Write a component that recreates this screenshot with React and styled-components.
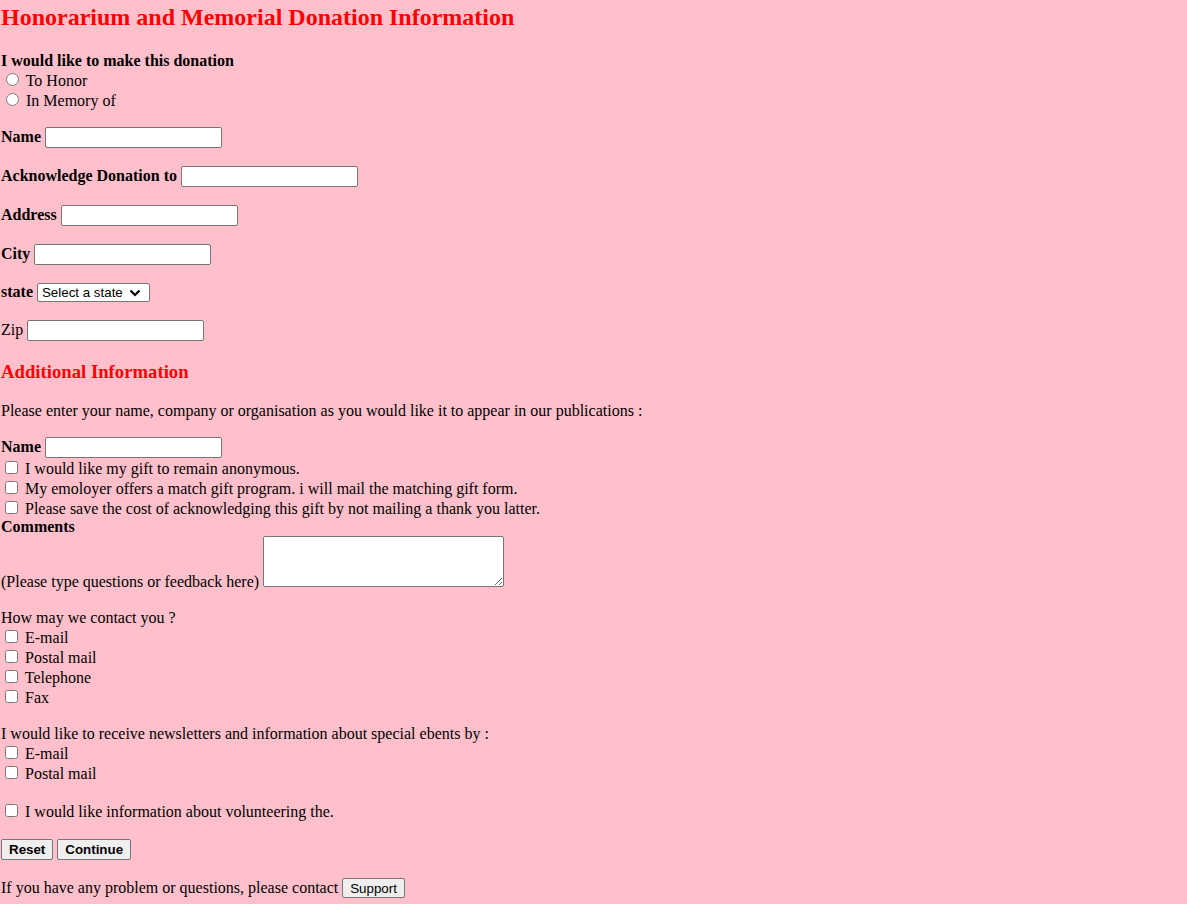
import React from "react";
import styled, { createGlobalStyle } from "styled-components";

const GlobalStyle = createGlobalStyle`
  html, body {
    margin: 0;
    padding: 0;
    background: pink;
  }
  body {
    font-family: "Liberation Serif", "Times New Roman", serif;
    font-size: 16px;
    color: #000;
  }
`;

const chevron =
  "url(\"data:image/svg+xml;utf8,<svg xmlns='http://www.w3.org/2000/svg' width='12' height='8' viewBox='0 0 12 8'><path d='M1.5 1.5 L6 6 L10.5 1.5' fill='none' stroke='black' stroke-width='2.2'/></svg>\")";

const Page = styled.form`
  padding: 4px 1px 8px 1px;
`;

const Title = styled.h2`
  color: red;
  font-size: 24px;
  font-weight: bold;
  margin: 0 0 21px 0;
`;

const SectionTitle = styled.h3`
  color: red;
  font-size: 18.72px;
  font-weight: bold;
  margin: 18.72px 0 19.5px 0;
`;

const Para = styled.p`
  margin: 16px 0;
  padding-bottom: ${(p) => p.$extra || 0}px;
`;

const Label = styled.b`
  font-weight: bold;
`;

const ChoiceLine = styled.label`
  display: block;
`;

const CommentLine = styled.div`
  padding-bottom: 2px;
`;

const TextField = styled.input`
  box-sizing: border-box;
  width: 177px;
  height: 21px;
  margin: ${(p) => (p.$tight ? "1px 0 0 0" : "1px 0")};
  padding: 1px 2px;
  border: 1px solid #767676;
  border-radius: 2px;
  background: #fff;
  font-family: "Liberation Sans", Arial, sans-serif;
  font-size: 13.33px;
`;

const StateSelect = styled.select`
  appearance: none;
  box-sizing: border-box;
  width: 113px;
  height: 19px;
  margin: 1px 0;
  padding: 0 20px 0 4px;
  border: 1px solid #767676;
  border-radius: 2px;
  background: #fff ${chevron} no-repeat right 8px center;
  font-family: "Liberation Sans", Arial, sans-serif;
  font-size: 13.33px;
  color: #000;
`;

const Feedback = styled.textarea`
  box-sizing: border-box;
  width: 241px;
  height: 51px;
  margin: 0;
  border: 1px solid #767676;
  border-radius: 2px;
  background: #fff;
  font-family: "Liberation Mono", monospace;
  font-size: 13.33px;
`;

const Button = styled.button`
  font-family: "Liberation Sans", Arial, sans-serif;
  font-size: 13.33px;
  font-weight: ${(p) => (p.$bold ? "bold" : "normal")};
  background: #efefef;
  border: 1px solid #767676;
  border-radius: 2px;
  padding: 1px 7px;
  margin: 1px 0;
  height: ${(p) => (p.$bold ? "21px" : "20px")};
  color: #000;
`;

const Check = ({ children }) => (
  <ChoiceLine>
    <input type="checkbox" /> {children}
  </ChoiceLine>
);

const FieldRow = ({ label, bold = true, children }) => (
  <Para>
    {bold ? <Label>{label}</Label> : label} {children}
  </Para>
);

export default function App() {
  return (
    <>
      <GlobalStyle />
      <Page onSubmit={(e) => e.preventDefault()}>
        <Title>Honorarium and Memorial Donation Information</Title>
        <Label>I would like to make this donation</Label>
        <ChoiceLine>
          <input type="radio" name="kind" /> To Honor
        </ChoiceLine>
        <ChoiceLine>
          <input type="radio" name="kind" /> In Memory of
        </ChoiceLine>

        <FieldRow label="Name">
          <TextField type="text" />
        </FieldRow>
        <FieldRow label="Acknowledge Donation to">
          <TextField type="text" />
        </FieldRow>
        <FieldRow label="Address">
          <TextField type="text" />
        </FieldRow>
        <FieldRow label="City">
          <TextField type="text" />
        </FieldRow>
        <FieldRow label="state">
          <StateSelect defaultValue="">
            <option value="">Select a state</option>
          </StateSelect>
        </FieldRow>
        <FieldRow label="Zip" bold={false}>
          <TextField type="text" />
        </FieldRow>

        <SectionTitle>Additional Information</SectionTitle>
        <Para>
          Please enter your name, company or organisation as you would like it
          to appear in our publications :
        </Para>
        <div>
          <Label>Name</Label> <TextField type="text" $tight />
        </div>
        <Check>I would like my gift to remain anonymous.</Check>
        <Check>My emoloyer offers a match gift program. i will mail the matching gift form.</Check>
        <Check>Please save the cost of acknowledging this gift by not mailing a thank you latter.</Check>
        <div>
          <Label>Comments</Label>
        </div>
        <CommentLine>
          (Please type questions or feedback here) <Feedback />
        </CommentLine>

        <Para $extra={2}>
          How may we contact you ?
          <Check>E-mail</Check>
          <Check>Postal mail</Check>
          <Check>Telephone</Check>
          <Check>Fax</Check>
        </Para>

        <Para $extra={2}>
          I would like to receive newsletters and information about special ebents by :
          <Check>E-mail</Check>
          <Check>Postal mail</Check>
        </Para>

        <Para $extra={1}>
          <Check>I would like information about volunteering the.</Check>
        </Para>

        <Para>
          <Button type="reset" $bold>Reset</Button> <Button type="submit" $bold>Continue</Button>
        </Para>

        <Para>
          If you have any problem or questions, please contact <Button type="button">Support</Button>
        </Para>
      </Page>
    </>
  );
}
